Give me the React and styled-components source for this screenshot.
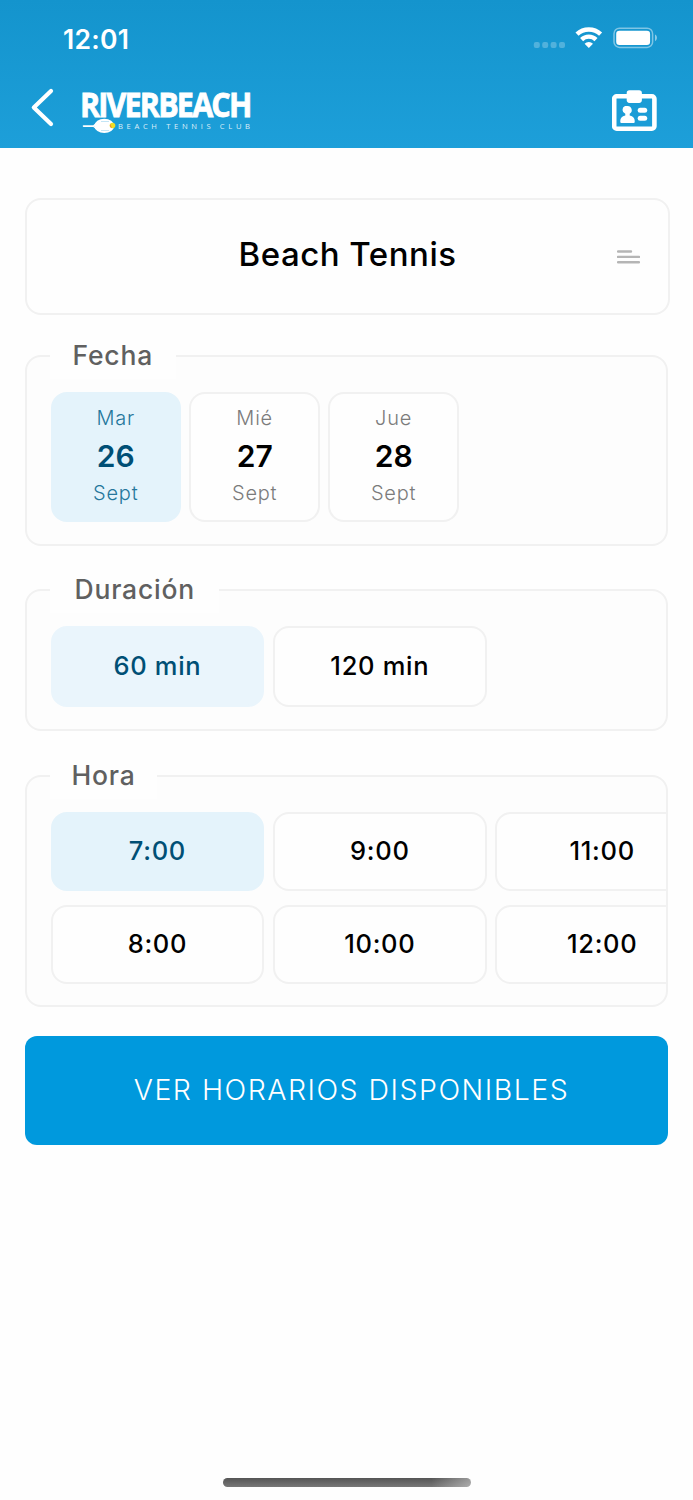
import { useState } from 'react';
import styled, { createGlobalStyle } from 'styled-components';

const GlobalStyle = createGlobalStyle`
  * {
    box-sizing: border-box;
  }

  body {
    margin: 0;
    background: #fefefe;
    font-family: Inter, 'Liberation Sans', sans-serif;
  }

  button {
    font-family: inherit;
    margin: 0;
    padding: 0;
  }
`;

const Screen = styled.div`
  display: flex;
  flex-direction: column;
  width: 693px;
  height: 1500px;
  overflow: hidden;
  background: #fefefe;
`;

const Header = styled.header`
  display: flex;
  flex-direction: column;
  height: 148px;
  background: linear-gradient(#1494cd, #1d9fd9);
  color: white;
`;

const StatusBar = styled.div`
  display: flex;
  align-items: center;
  justify-content: space-between;
  height: 76px;
  padding: 0 35px 0 63px;
`;

const Clock = styled.span`
  font-size: 26.5px;
  font-weight: 600;
  line-height: 32px;
  letter-spacing: 0.3px;
  padding-top: 1px;
`;

const NavBar = styled.nav`
  display: flex;
  align-items: center;
  height: 70px;
  padding: 0 36px 0 30px;
`;

const IconButton = styled.button`
  display: flex;
  border: 0;
  background: none;
  color: inherit;
`;

const BackButton = styled(IconButton)`
  margin-bottom: 7px;
`;

const Brand = styled.div`
  display: flex;
  flex: 1;
  padding: 0 0 0 25px;
`;

const LogoDrawing = styled.svg`
  overflow: visible;
`;

const Main = styled.main`
  display: flex;
  flex-direction: column;
  flex: 1;
  padding: 49.5px 25px 0;
`;

const SportCard = styled.div`
  display: grid;
  grid-template-columns: 79px 1fr 79px;
  align-items: center;
  justify-items: center;
  width: 645px;
  height: 117.5px;
  border: 2px solid #f1f1f1;
  border-radius: 16px;
  background: #fefefe;
`;

const SportName = styled.h1`
  grid-column: 2;
  margin: 0 0 4px;
  font-size: 33px;
  font-weight: 500;
  line-height: 40px;
  letter-spacing: 0.5px;
  white-space: nowrap;
  color: #000;
`;

const Panel = styled.section`
  display: flex;
  flex-direction: column;
  align-items: flex-start;
  width: 643px;
  height: ${(props) => props.$height}px;
  margin-top: ${(props) => props.$gap}px;
  padding-left: 23.5px;
  border: 2px solid #f1f1f1;
  border-radius: 16px;
  background: #fdfdfd;
`;

const Legend = styled.h2`
  width: ${(props) => props.$width}px;
  height: 46px;
  margin: -24px 0 12.5px -0.5px;
  padding-left: ${(props) => props.$indent}px;
  background: #fefefe;
  font-size: 26.5px;
  font-weight: 500;
  line-height: 45px;
  letter-spacing: 0.8px;
  color: #606060;
`;

const Options = styled.div`
  display: flex;
  gap: 8.6px;
`;

const HourGrid = styled.div`
  display: grid;
  grid-template-rows: repeat(2, 79px);
  grid-auto-columns: 213.8px;
  grid-auto-flow: column;
  gap: 14px 8.6px;
  width: 615.5px;
  overflow: hidden;
`;

const Option = styled.button`
  display: flex;
  align-items: center;
  justify-content: center;
  width: 213.8px;
  height: ${(props) => props.$height || 79}px;
  padding-bottom: 2px;
  border: 2px solid ${(props) => (props.$active ? props.$tint : '#f1f1f1')};
  border-radius: 16px;
  background: ${(props) => (props.$active ? props.$tint : '#fefefe')};
  color: ${(props) => (props.$active ? '#004f75' : '#000')};
  font-size: 25.5px;
  font-weight: 500;
  letter-spacing: 0.7px;
`;

const DateOption = styled(Option)`
  flex-direction: column;
  width: 130.4px;
  padding: 0 0 3px;
  letter-spacing: 0;
`;

const DateText = styled.span`
  font-size: 20px;
  font-weight: 350;
  line-height: 24px;
  letter-spacing: 0.8px;
  color: ${(props) => (props.$active ? '#25779c' : '#7b7b7b')};
`;

const DayNumber = styled.span`
  margin: 11px 0 10px;
  font-size: 30px;
  font-weight: 600;
  line-height: 30px;
`;

const SubmitButton = styled.button`
  width: 643px;
  height: 109px;
  margin-top: 29px;
  padding: 0 0 2px 10px;
  border: 0;
  border-radius: 12px;
  background: #0099dd;
  color: white;
  font-size: 28.5px;
  font-weight: 300;
  letter-spacing: 1.5px;
`;

const HomeIndicator = styled.div`
  width: 248px;
  height: 9px;
  margin: 0 auto 13px;
  border-radius: 5px;
  background: linear-gradient(90deg, transparent 84%, rgba(255, 255, 255, 0.4)),
    linear-gradient(#555, #777);
`;

function StatusIcons() {
  return (
    <svg width="125" height="24" viewBox="533 26 125 24" fill="none">
      <g fill="#fff" fillOpacity="0.25">
        <rect x="533.8" y="42" width="6" height="6" rx="2" />
        <rect x="542.2" y="42" width="6" height="6" rx="2" />
        <rect x="550.6" y="42" width="6" height="6" rx="2" />
        <rect x="559" y="42" width="6" height="6" rx="2" />
      </g>
      <path
        d="M577 34.2a17 17 0 0 1 23.6 0M581.6 39.6a10.3 10.3 0 0 1 14.4 0"
        stroke="#fff"
        strokeWidth="4.4"
      />
      <path d="M588.8 48l-4.2-4.2a6 6 0 0 1 8.4 0z" fill="#fff" />
      <rect x="614" y="28.2" width="38.6" height="19.2" rx="5.5" stroke="#fff" strokeOpacity="0.45" strokeWidth="1.5" />
      <rect x="616.2" y="30.8" width="33.9" height="14.2" rx="3.2" fill="#fff" />
      <path d="M655 34.6c2.6 1 2.6 5.6 0 6.6z" fill="#fff" fillOpacity="0.5" />
    </svg>
  );
}

function BackIcon() {
  return (
    <svg width="25" height="40" viewBox="30 88 25 40" fill="none">
      <path d="M51 91L33.8 107.4L51 124" stroke="#fff" strokeWidth="4.2" strokeLinecap="round" strokeLinejoin="round" />
    </svg>
  );
}

function Logo() {
  return (
    <LogoDrawing width="172" height="46" viewBox="80 88 172 46">
      <text
        x="80"
        y="116.8"
        textLength="170.5"
        lengthAdjust="spacingAndGlyphs"
        fill="#fff"
        stroke="#fff"
        strokeWidth="0.8"
        fontFamily="'Open Sans', 'Noto Sans', sans-serif"
        fontSize="33.5"
        fontWeight="700"
        letterSpacing="-2"
      >
        RIVERBEACH
      </text>
      <path d="M83.5 126.1h10l2.5-2.3M93.5 126.1l2.5 2" stroke="#fff" strokeWidth="1.6" fill="none" strokeLinecap="round" />
      <ellipse cx="104.3" cy="125.9" rx="9.8" ry="7.2" fill="#fff" />
      <path d="M101 121.5h8M101 130.5h8" stroke="#a9daf1" strokeWidth="0.7" />
      <circle cx="112.5" cy="125.5" r="2.8" fill="#f0dd22" />
      <path d="M110.3 124a2.8 2.8 0 0 0 1.8 4.2z" fill="#f08a3c" />
      <text
        x="118"
        y="129.4"
        textLength="132"
        fill="#fff"
        fillOpacity="0.85"
        fontFamily="'Open Sans', 'Noto Sans', sans-serif"
        fontSize="7.6"
      >
        BEACH TENNIS CLUB
      </text>
    </LogoDrawing>
  );
}

function BadgeIcon() {
  return (
    <svg width="45" height="42" viewBox="612 90 45 42" fill="#fff">
      <rect x="614.2" y="96.3" width="40.2" height="32.4" rx="2.5" fill="none" stroke="#fff" strokeWidth="4.6" />
      <rect x="626.7" y="90.3" width="15.2" height="12.6" rx="2.8" />
      <path d="M627.4 106a4.2 4.2 0 0 1 2.3 7.8v1.7c3.5 1 5 2.6 5 5.2v1.2a1 1 0 0 1-1 1h-12.400a1 1 0 0 1-1-1v-1.200c0-2.600 1.500-4.200 5-5.200v-1.700a4.200 4.200 0 0 1 -.3-7.800z" />
      <rect x="637.7" y="107.7" width="9.5" height="5" rx="2.5" />
      <rect x="637.7" y="115.8" width="9.5" height="5" rx="2.5" />
    </svg>
  );
}

function MenuIcon() {
  return (
    <svg width="23" height="16" viewBox="0 0 23 16">
      <path d="M1 3.5h13M1 8.9h21M1 14.2h21" stroke="#b5b5b5" strokeWidth="2.4" strokeLinecap="round" />
    </svg>
  );
}

const dates = [
  { weekday: 'Mar', day: '26', month: 'Sept' },
  { weekday: 'Mié', day: '27', month: 'Sept' },
  { weekday: 'Jue', day: '28', month: 'Sept' },
];
const durations = ['60 min', '120 min'];
const hours = ['7:00', '8:00', '9:00', '10:00', '11:00', '12:00'];

function App() {
  const [date, setDate] = useState('26');
  const [duration, setDuration] = useState('60 min');
  const [hour, setHour] = useState('7:00');

  return (
    <Screen>
      <GlobalStyle />
      <Header>
        <StatusBar>
          <Clock>12:01</Clock>
          <StatusIcons />
        </StatusBar>
        <NavBar>
          <BackButton aria-label="Volver"><BackIcon /></BackButton>
          <Brand><Logo /></Brand>
          <IconButton aria-label="Perfil"><BadgeIcon /></IconButton>
        </NavBar>
      </Header>

      <Main>
        <SportCard>
          <SportName>Beach Tennis</SportName>
          <MenuIcon />
        </SportCard>

        <Panel $height={191} $gap={40}>
          <Legend $width={126} $indent={22.5}>Fecha</Legend>
          <Options>
            {dates.map((item) => (
              <DateOption
                key={item.day}
                $active={item.day === date}
                $tint="#e4f3fb"
                $height={130}
                onClick={() => setDate(item.day)}
              >
                <DateText $active={item.day === date}>{item.weekday}</DateText>
                <DayNumber>{item.day}</DayNumber>
                <DateText $active={item.day === date}>{item.month}</DateText>
              </DateOption>
            ))}
          </Options>
        </Panel>

        <Panel $height={142} $gap={43}>
          <Legend $width={169} $indent={24.5}>Duración</Legend>
          <Options>
            {durations.map((item) => (
              <Option
                key={item}
                $active={item === duration}
                $tint="#eaf5fc"
                $height={81.5}
                onClick={() => setDuration(item)}
              >
                {item}
              </Option>
            ))}
          </Options>
        </Panel>

        <Panel $height={232} $gap={44}>
          <Legend $width={107} $indent={21.5}>Hora</Legend>
          <HourGrid>
            {hours.map((item) => (
              <Option
                key={item}
                $active={item === hour}
                $tint="#e4f3fb"
                onClick={() => setHour(item)}
              >
                {item}
              </Option>
            ))}
          </HourGrid>
        </Panel>

        <SubmitButton>VER HORARIOS DISPONIBLES</SubmitButton>
      </Main>

      <HomeIndicator />
    </Screen>
  );
}

export default App;
